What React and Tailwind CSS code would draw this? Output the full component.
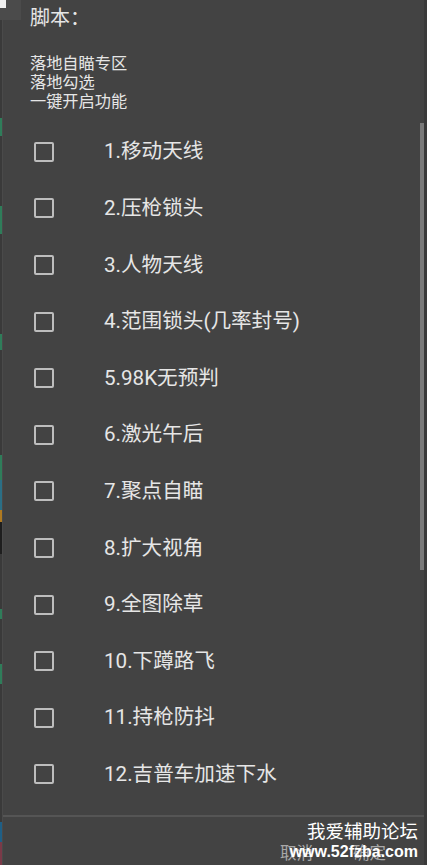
import React from 'react';

const items = [
  '1.移动天线',
  '2.压枪锁头',
  '3.人物天线',
  '4.范围锁头(几率封号)',
  '5.98K无预判',
  '6.激光午后',
  '7.聚点自瞄',
  '8.扩大视角',
  '9.全图除草',
  '10.下蹲路飞',
  '11.持枪防抖',
  '12.吉普车加速下水',
];

// colour bits of the game that peek out along the left edge
const edge = [
  ['h-[118px]', 'bg-[#3a3a3a]'],
  ['h-[18px]', 'bg-[#2f7d5a]'],
  ['h-[70px]', 'bg-[#3a3a3a]'],
  ['h-[28px]', 'bg-[#2f7d5a]'],
  ['h-[100px]', 'bg-[#3a3a3a]'],
  ['h-[16px]', 'bg-[#2f7d5a]'],
  ['h-[105px]', 'bg-[#3a3a3a]'],
  ['h-[25px]', 'bg-[#2f7d5a]'],
  ['h-[10px]', 'bg-[#2b6f86]'],
  ['h-[20px]', 'bg-[#2b6f86]'],
  ['h-[12px]', 'bg-[#b07a20]'],
  ['h-[32px]', 'bg-[#1e1e1e]'],
  ['h-[55px]', 'bg-[#3a3a3a]'],
  ['h-[10px]', 'bg-[#2f7d5a]'],
  ['h-[45px]', 'bg-[#3a3a3a]'],
  ['h-[20px]', 'bg-[#2f7d5a]'],
  ['h-[138px]', 'bg-[#3a3a3a]'],
  ['h-[20px]', 'bg-[#1f5f86]'],
  ['h-[23px]', 'bg-[#7a3a48]'],
];

export default function App() {
  return (
    <div
      className="relative w-[427px] h-[865px] overflow-hidden flex bg-[#434343]"
      style={{ fontFamily: 'Roboto, "Noto Sans CJK SC", sans-serif' }}
    >
      {/* left edge */}
      <div className="w-[2px] flex flex-col shrink-0">
        {edge.map(([h, c], i) => (
          <div key={i} className={`${h} ${c}`} />
        ))}
      </div>

      {/* dialog */}
      <div className="flex-1 flex flex-col bg-[#434343] border-l border-[#4a4a4a]">
        <div className="pl-[27px] pt-[6px]">
          <div className="text-[20px] leading-[24px] text-[#e6e6e6]">脚本：</div>
          <div className="mt-[24px] text-[16.2px] leading-[19px] text-[#e6e6e6]">
            <div>落地自瞄专区</div>
            <div>落地勾选</div>
            <div>一键开启功能</div>
          </div>
        </div>

        <div className="flex-1 mt-[12.5px] overflow-hidden">
          {items.map((t) => (
            <div key={t} className="h-[56.6px] flex items-center">
              <div className="ml-[31px] w-[20px] h-[20px] border-2 border-[#bdbdbd] rounded-[2px] shrink-0" />
              <div className="ml-[50px] text-[20.6px] text-[#e6e6e6] whitespace-nowrap">{t}</div>
            </div>
          ))}
        </div>

        <div className="h-[2px] bg-[#555555]" />

        <div className="h-[48px] flex items-end justify-end pr-[38px] gap-[40px] text-[16.5px] leading-[22px] text-[#a8a8a8]">
          <span>取消</span>
          <span>确定</span>
        </div>
      </div>

      {/* right edge */}
      <div className="w-[3px] shrink-0 bg-[#3a3a3a]" />

      {/* scrollbar */}
      <div className="absolute right-[3px] top-[123px] w-[4px] h-[447px] bg-[#7a7a7a]" />

      {/* corner mark */}
      <div className="absolute left-0 top-0 w-[21px] h-[20px] bg-[#4b4b4b]">
        <div className="w-[6px] h-[8px] bg-[#f0f0f0]" />
      </div>

      {/* watermark */}
      <div className="absolute right-[9px] top-[818px] flex flex-col items-end text-white">
        <div className="text-[18.5px] leading-[24px]" style={{ fontFamily: '"Noto Sans CJK SC", sans-serif' }}>
          我爱辅助论坛
        </div>
        <div className="text-[16px] leading-[20px] font-bold" style={{ fontFamily: '"Liberation Sans", sans-serif' }}>
          www.52fzba.com
        </div>
      </div>
    </div>
  );
}
